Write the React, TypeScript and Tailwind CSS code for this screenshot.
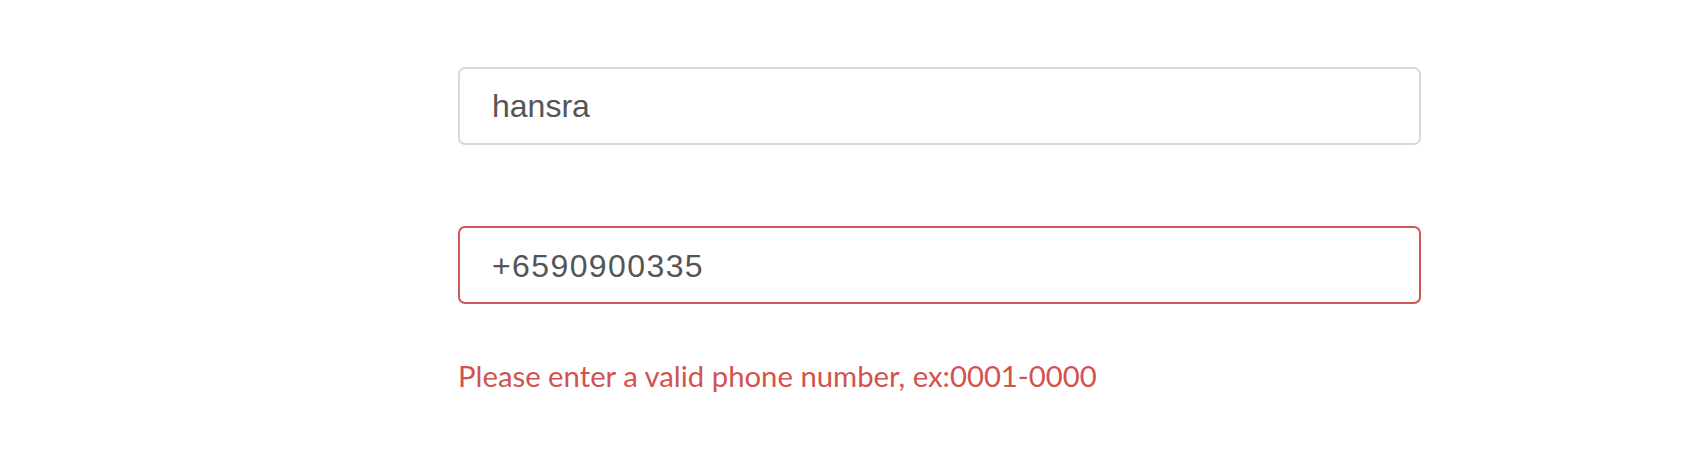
export default function App() {
  return (
    <div className="w-[1706px] h-[456px] bg-white pl-[458px] pt-[67px]">
      <div className="w-[963px] flex flex-col">
        <input
          readOnly
          value="hansra"
          className="h-[78px] w-full rounded-[7px] border-2 border-[#d9d9d9] bg-white pl-[32px] text-[32px] text-[#555555] outline-none font-['Liberation_Sans',Arial,sans-serif]"
        />
        <input
          readOnly
          value="+6590900335"
          className="mt-[81px] h-[78px] w-full rounded-[7px] border-2 border-[#cf5655] bg-white pl-[32px] pt-[2px] text-[32px] tracking-[1.4px] text-[#555555] outline-none font-['Liberation_Sans',Arial,sans-serif]"
        />
        <p className="mt-[52px] text-[29.3px] leading-[40px] text-[#d05350] font-['Lato','Open_Sans',sans-serif]">
          Please enter a valid phone number, ex:0001-0000
        </p>
      </div>
    </div>
  );
}
